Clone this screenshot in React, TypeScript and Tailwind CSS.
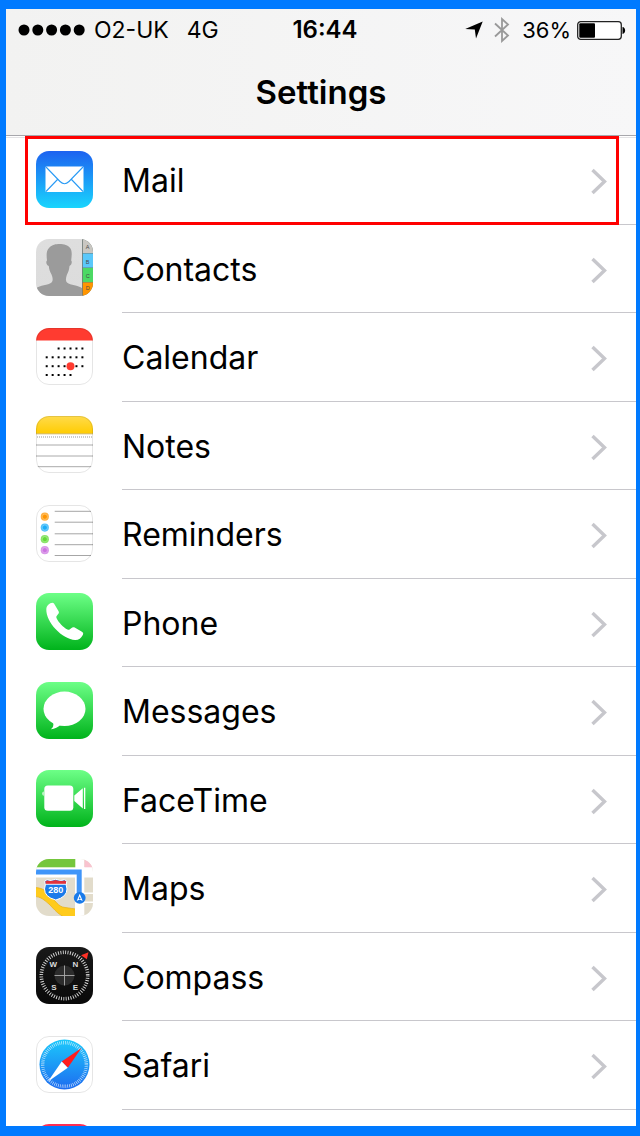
import { useId } from "react";
import type { ReactNode } from "react";

function Tile({
  from,
  to,
  outlined,
  children,
}: {
  from: string;
  to: string;
  outlined?: boolean;
  children?: ReactNode;
}) {
  const id = useId();
  return (
    <svg viewBox="0 0 57 57" className="size-[57px] shrink-0" aria-hidden="true">
      <defs>
        <linearGradient id={id + "g"} x1="0" y1="0" x2="0" y2="1">
          <stop offset="0" stopColor={from} />
          <stop offset="1" stopColor={to} />
        </linearGradient>
        <clipPath id={id + "c"}>
          <rect width="57" height="57" rx="13" />
        </clipPath>
      </defs>
      <g clipPath={`url(#${id}c)`}>
        <rect width="57" height="57" fill={`url(#${id}g)`} />
        {children}
      </g>
      {outlined && (
        <rect x="0.5" y="0.5" width="56" height="56" rx="12.5" fill="none" stroke="#000" strokeOpacity="0.1" />
      )}
    </svg>
  );
}

function MailIcon() {
  return (
    <Tile from="#1d62f0" to="#19d5fd">
      <rect x="9.5" y="15.5" width="38" height="25.5" rx="1" fill="#fff" />
      <path
        d="M10 16 L24 30.5 Q28.5 35 33 30.5 L47 16 M10 40.5 L21.5 28.5 M47 40.5 L35.5 28.5"
        fill="none"
        stroke="#2a9bf5"
        strokeWidth="1.1"
      />
    </Tile>
  );
}

function ContactsIcon() {
  const tabs = [
    { letter: "A", y: 0, h: 14, fill: "#c9c7c2" },
    { letter: "B", y: 14.5, h: 14, fill: "#5ac8fa" },
    { letter: "C", y: 29, h: 14, fill: "#4cd964" },
    { letter: "D", y: 43.5, h: 14, fill: "#ff9500" },
  ];
  return (
    <Tile from="#dedede" to="#dcdcdc">
      <path
        d="M0 57 V49.5 C4 46 12 46.5 15.5 43.5 C17.5 41.5 16.5 38 15.5 35.5 C13.8 32.5 13 30 12.8 27 C10.5 26.5 9.5 22.5 11 21.5 C10.5 17 10 12 13 9 C16 5.5 20 5 23.5 5 C28 5 32 6 34.5 9.5 C36.5 13 35.5 17.5 35.2 21.5 C36.5 22.5 35.5 26.5 33.5 27 C33.2 30 32.5 33 31 35.5 C30 38.5 29.2 41.5 31 43.5 C34.5 46.5 42 46 46.5 49.5 V57 Z"
        fill="#9b9b9b"
      />
      <rect x="46" y="0" width="11" height="57" fill="#6d7a76" />
      {tabs.map((t) => (
        <g key={t.letter}>
          <rect x="46.8" y={t.y} width="11" height={t.h} fill={t.fill} />
          <text x="51.7" y={t.y + (t.letter === "D" ? 7 : 10.2)} textAnchor="middle" fontSize="5.5" fontFamily="Liberation Sans" fill="#4a4a4a">
            {t.letter}
          </text>
        </g>
      ))}
    </Tile>
  );
}

function CalendarIcon() {
  const rows = [
    { y: 20.5, from: 2, to: 6 },
    { y: 29.3, from: 0, to: 6 },
    { y: 38.2, from: 0, to: 6 },
    { y: 47, from: 0, to: 4 },
  ];
  return (
    <Tile from="#fff" to="#fff" outlined>
      <rect width="57" height="12.5" fill="#ff3b30" />
      {rows.map((r) =>
        [0, 1, 2, 3, 4, 5, 6]
          .filter((c) => c >= r.from && c <= r.to)
          .map((c) => <rect key={`${r.y}-${c}`} x={9.7 + c * 5.95} y={r.y - 1} width="2" height="2" fill="#000" />)
      )}
      <circle cx="34.5" cy="38.2" r="4" fill="#ff3b30" />
    </Tile>
  );
}

function NotesIcon() {
  const id = useId();
  return (
    <Tile from="#fff" to="#fff" outlined>
      <defs>
        <linearGradient id={id} x1="0" y1="0" x2="0" y2="1">
          <stop offset="0" stopColor="#ffdb4c" />
          <stop offset="1" stopColor="#ffcc02" />
        </linearGradient>
      </defs>
      <rect width="57" height="17.5" fill={`url(#${id})`} />
      <path d="M0 17.8 H57" stroke="#c9a62c" strokeWidth="0.8" />
      <path d="M1 21 H57" stroke="#999" strokeWidth="1" strokeDasharray="1 1" />
      <path d="M0 29 H57 M0 40 H57 M0 50.7 H57" stroke="#aaa" />
    </Tile>
  );
}

function RemindersIcon() {
  const dots = [
    { y: 11.7, fill: "#ff9500" },
    { y: 22.6, fill: "#1badf8" },
    { y: 34.2, fill: "#63da38" },
    { y: 45.2, fill: "#cc73e1" },
  ];
  return (
    <Tile from="#fff" to="#fff" outlined>
      {dots.map((d) => (
        <g key={d.fill}>
          <circle cx="8.8" cy={d.y} r="4.1" fill={d.fill} fillOpacity="0.75" />
          <circle cx="8.8" cy={d.y} r="2.5" fill={d.fill} stroke="#fff" strokeOpacity="0.5" strokeWidth="0.5" />
        </g>
      ))}
      <path d="M18.7 6.3 H55 M18.7 17.2 H57 M18.7 28.8 H57 M18.7 39.7 H57 M18.7 50.5 H55" stroke="#a6a6a6" />
    </Tile>
  );
}

function PhoneIcon() {
  return (
    <Tile from="#6dff87" to="#00b31b">
      <path
        d="M10.3 16.5 C10.3 12.5 13.5 10 16.5 9.8 C17.5 9.8 18 10.5 18.6 11.5 L22.6 18.2 C23.3 19.7 22.8 20.4 21.8 21.4 C20.6 22.7 20 23.5 20.5 25 C22.5 29.5 27.5 34.5 31.5 36.6 C33 37.2 34 36.5 35.2 35.3 C36.3 34.1 37.4 33.8 38.7 34.5 L45.5 38.6 C47.2 39.7 47.6 40.6 46.8 42 C45.2 45.2 42.5 47.2 39 47 C33 46.6 25.5 42.5 19.5 36 C13.8 30 10.2 22.5 10.3 16.5 Z"
        fill="#fff"
      />
    </Tile>
  );
}

function MessagesIcon() {
  return (
    <Tile from="#6dff87" to="#00b31b">
      <ellipse cx="28.5" cy="26.8" rx="21" ry="17.2" fill="#fff" />
      <path d="M17 40 C18 43.5 17 45.8 14.8 47.3 C19 47 22 45.3 24.5 42.5 Z" fill="#fff" />
    </Tile>
  );
}

function FaceTimeIcon() {
  return (
    <Tile from="#6dff87" to="#00b31b">
      <rect x="8.3" y="15.5" width="29" height="25.3" rx="3.5" fill="#fff" />
      <path d="M38.3 25.5 L46.8 18.3 V38.4 L38.3 31 Z M48 17.7 H49.3 V39 H48 Z" fill="#fff" />
      <path d="M7.6 21.5 C6 22 6 25.2 7.6 25.7 Z" fill="#fff" />
    </Tile>
  );
}

function MapsIcon() {
  return (
    <Tile from="#e2dccb" to="#e2dccb">
      <path
        d="M-2 28.5 C5 28.5 9 31 13 35 C19 41 22 48 29 48.5 C34 49 37 50 41 50 V60 H33 C23 57 18 50 13 45 C8 41 5 37.5 -2 37.5 Z"
        fill="#ffcb1c"
        stroke="#e9b21c"
        strokeWidth="0.8"
      />
      <rect y="8" width="57" height="10.5" fill="#fff" />
      <rect x="39" width="9.3" height="57" fill="#fff" />
      <rect x="48" y="33.5" width="9" height="1.5" fill="#fff" />
      <rect x="48" y="42.5" width="9" height="1.5" fill="#fff" />
      <rect width="39.3" height="8.3" fill="#74c63c" />
      <rect x="48.5" width="9" height="8.3" fill="#f9c3cf" />
      <path d="M0 13 H43.2 V36" fill="none" stroke="#3f95f9" strokeWidth="5" />
      <path
        d="M8.8 22 L11 20.8 Q15 22.3 19.5 20.3 Q24.5 22.3 28.5 20.8 L30.8 22 Q29.5 26 31 30 Q31 38 19.8 41 Q8.5 38 8.5 30 Q10 26 8.8 22 Z"
        fill="#1a7bea"
        stroke="#fff"
        strokeWidth="1"
      />
      <path d="M9.4 22.3 L11.3 21.4 Q15 22.9 19.5 20.9 Q24.5 22.9 28.3 21.4 L30.2 22.3 L29.8 25 H9.8 Z" fill="#e0323c" />
      <path d="M9.4 25.3 H30.2" stroke="#fff" strokeWidth="0.9" />
      <text x="19.8" y="34.3" textAnchor="middle" fontSize="9" fontWeight="700" fontFamily="Liberation Sans" fill="#fff">
        280
      </text>
      <circle cx="43.7" cy="38.8" r="5.9" fill="#1a7bea" />
      <path d="M43.7 34.8 L46.7 42 L43.7 40.4 L40.7 42 Z" fill="#fff" />
      <path d="M43.7 37.5 L44.7 40 H42.7 Z" fill="#1a7bea" />
    </Tile>
  );
}

function CompassIcon() {
  return (
    <Tile from="#191919" to="#090909">
      <circle cx="28.5" cy="28.5" r="23.2" fill="none" stroke="#ddd" strokeWidth="3.6" strokeDasharray="0.9 1.53" />
      <circle cx="28.5" cy="28.5" r="10" fill="#2c2c2c" />
      <path d="M28.5 18.5 V38.5 M18.5 28.5 H38.5" stroke="#aaa" strokeWidth="0.9" />
      <g fill="#dadada" fontSize="8" fontWeight="700" fontFamily="Liberation Sans" textAnchor="middle">
        <text x="17.3" y="20">W</text>
        <text x="39.5" y="20">N</text>
        <text x="17.8" y="42.5">S</text>
        <text x="39.5" y="42.5">E</text>
      </g>
      <path d="M45 8.2 L52.5 5.3 L50.8 12.3 Z" fill="#ff3126" />
    </Tile>
  );
}

function SafariIcon() {
  const id = useId();
  return (
    <Tile from="#fff" to="#fff" outlined>
      <defs>
        <linearGradient id={id} x1="0" y1="0" x2="0" y2="1">
          <stop offset="0" stopColor="#1cc8fb" />
          <stop offset="1" stopColor="#1d6cf0" />
        </linearGradient>
      </defs>
      <circle cx="28.5" cy="28.5" r="25" fill={`url(#${id})`} />
      <circle cx="28.5" cy="28.5" r="21.8" fill="none" stroke="#fff" strokeOpacity="0.75" strokeWidth="3.4" strokeDasharray="0.7 1.2" />
      <path d="M45.5 12 L25.7 25.5 L31.8 31.8 Z" fill="#ff1d1d" />
      <path d="M12 45.5 L25.7 25.5 L31.8 31.8 Z" fill="#fff" />
    </Tile>
  );
}

function Chevron() {
  return (
    <svg viewBox="0 0 18 28" className="h-7 w-[18px] shrink-0" fill="none" stroke="#c7c7cc" strokeWidth="3.4" aria-hidden="true">
      <path d="M2.5 3 L14.5 14.5 L2.5 26" />
    </svg>
  );
}

function SettingsRow({ icon, label, highlighted }: { icon: ReactNode; label?: string; highlighted?: boolean }) {
  return (
    <li className="relative h-[89px] even:h-[88px]">
      <a href="#" className="flex h-full items-center pl-[30px]">
        <span className="pb-[3px]">{icon}</span>
        <span className="ml-[29px] flex h-full flex-1 items-center justify-between border-b border-[#c8c7cc] pt-[2px] pr-7">
          <span>{label}</span>
          {label && <Chevron />}
        </span>
      </a>
      {highlighted && (
        <div className="pointer-events-none absolute top-0 right-[17px] bottom-0 left-[19px] border-3 border-[#ff0000]" />
      )}
    </li>
  );
}

function StatusBar() {
  return (
    <div className="grid h-[42px] grid-cols-[1fr_auto_1fr] items-center pr-1 pl-3">
      <div className="flex items-center text-[23px]">
        <svg viewBox="0 0 68 12" className="mr-2 h-3 w-[68px]" aria-hidden="true">
          {[6, 19.8, 33.6, 47.4, 61.2].map((x) => (
            <circle key={x} cx={x} cy="6" r="5.5" />
          ))}
        </svg>
        <span className="mr-[18px]">O2-UK</span>
        <span>4G</span>
      </div>
      <span className="text-[24px] font-semibold">16:44</span>
      <div className="flex items-center justify-end pr-[6px] text-[22px]">
        <svg viewBox="0 0 18 18" className="mr-[11px] size-[18px]" aria-hidden="true">
          <path d="M17.7 0.5 L11 17.5 L9.8 8.6 L0.2 8 Z" />
        </svg>
        <svg viewBox="0 0 16 26" className="mr-3 h-[26px] w-4" fill="none" stroke="#999" strokeWidth="1.8" aria-hidden="true">
          <path d="M1 6.5 L14 18.5 L8 24 V2 L14 7.5 L1 19.5" />
        </svg>
        <span className="mr-[6px]">36%</span>
        <svg viewBox="0 0 49 19" className="h-[19px] w-[49px]" aria-hidden="true">
          <rect x="0.7" y="0.7" width="43.6" height="17.6" rx="3" fill="#fff" stroke="#222" strokeWidth="1.3" />
          <rect x="2.3" y="2.3" width="15.7" height="14.4" rx="1" />
          <path d="M45.5 6 C49 6.3 49 12.7 45.5 13 Z" />
        </svg>
      </div>
    </div>
  );
}

export default function App() {
  return (
    <div className="flex h-screen flex-col overflow-hidden border-t-[9px] border-r-4 border-b-[10px] border-l-[6px] border-[#007aff] bg-white font-['Inter',sans-serif] text-black">
      <header className="h-[127px] shrink-0 border-b border-[#a7a7ac] bg-linear-to-r from-[#f2f2f1] to-[#f7f7f8]">
        <StatusBar />
        <h1 className="pt-[18px] text-center text-[33px] leading-[46px] font-semibold">Settings</h1>
      </header>
      <ul className="min-h-0 flex-1 overflow-hidden bg-linear-to-b from-white from-[1px] via-[#c8c7cc] via-[1px] to-white to-[2px] text-[32px]">
        <SettingsRow icon={<MailIcon />} label="Mail" highlighted />
        <SettingsRow icon={<ContactsIcon />} label="Contacts" />
        <SettingsRow icon={<CalendarIcon />} label="Calendar" />
        <SettingsRow icon={<NotesIcon />} label="Notes" />
        <SettingsRow icon={<RemindersIcon />} label="Reminders" />
        <SettingsRow icon={<PhoneIcon />} label="Phone" />
        <SettingsRow icon={<MessagesIcon />} label="Messages" />
        <SettingsRow icon={<FaceTimeIcon />} label="FaceTime" />
        <SettingsRow icon={<MapsIcon />} label="Maps" />
        <SettingsRow icon={<CompassIcon />} label="Compass" />
        <SettingsRow icon={<SafariIcon />} label="Safari" />
        <SettingsRow icon={<Tile from="#ff2d55" to="#ff5e3a" />} />
      </ul>
    </div>
  );
}
